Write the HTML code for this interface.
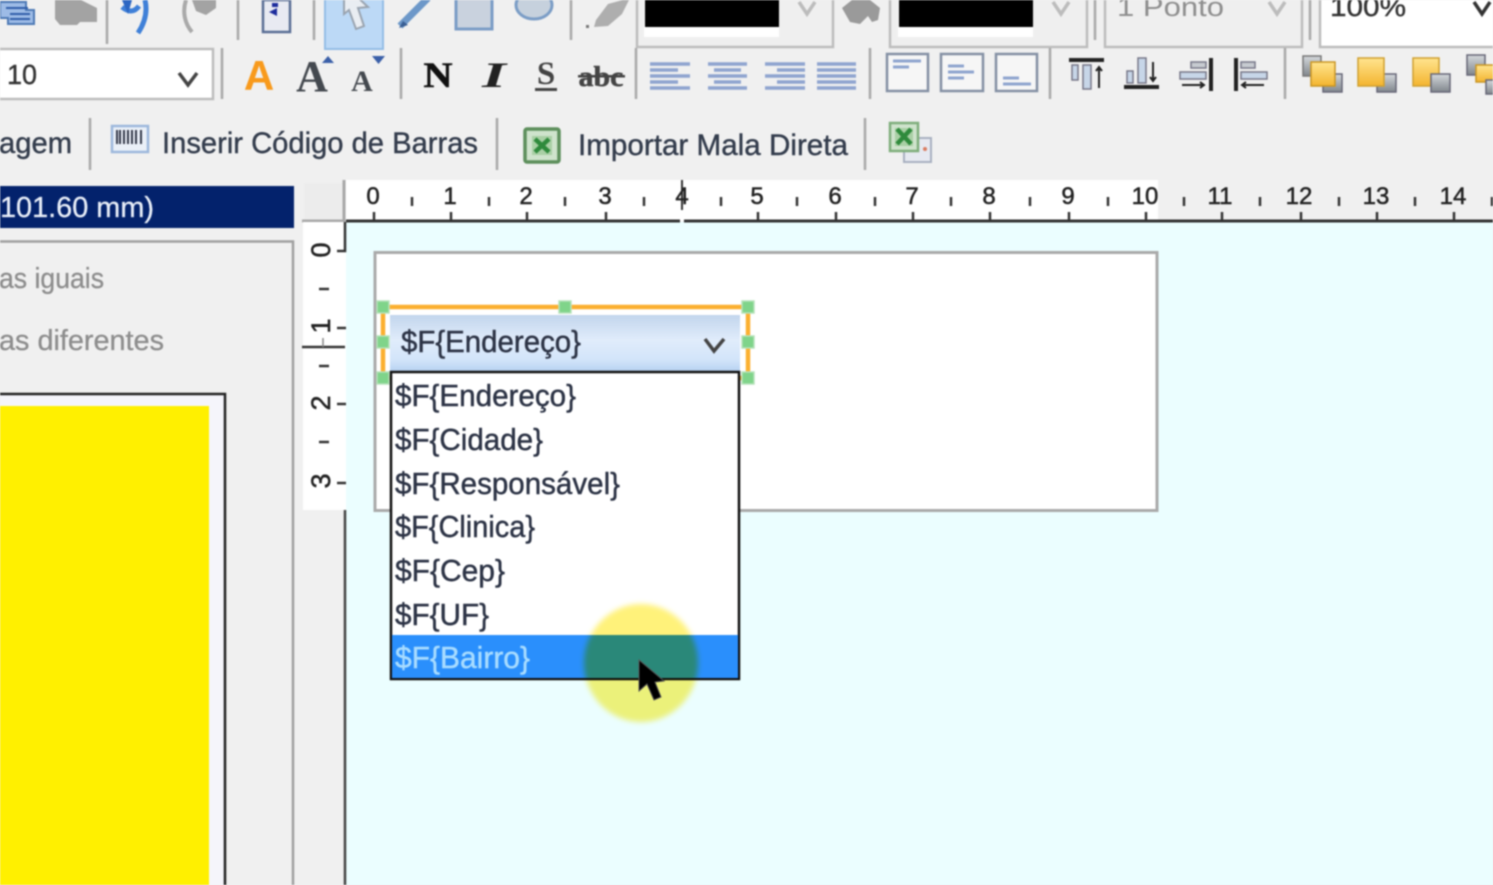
<!DOCTYPE html>
<html lang="pt"><head><meta charset="utf-8"><title>Editor</title>
<style>
html,body{margin:0;padding:0;background:#f0f0f0;width:1493px;height:885px;overflow:hidden}
svg{display:block;position:absolute;left:0;top:0;filter:blur(.85px)}
text{font-family:"Liberation Sans","DejaVu Sans",sans-serif}
.r{font-size:24px;fill:#222;stroke:#222;stroke-width:.5;text-anchor:middle}
.rv{font-size:27px}
.i{font-size:31px;fill:#2c3345;stroke:#2c3345;stroke-width:.45}
.t{font-size:30px;fill:#333c4c;stroke:#333c4c;stroke-width:.4}
.sep{stroke:#a8a8a8;stroke-width:2.5}
.tk{stroke:#333;stroke-width:2.5}
.ch{fill:none;stroke-width:3.5}
.al{stroke:#8ea4cf;stroke-width:3.5}
.bx{fill:#f6f6f6;stroke:#8490a4;stroke-width:2.5}
.ln{stroke:#8ea4cf;stroke-width:3}
</style></head><body>
<svg width="1493" height="885" viewBox="0 0 1493 885" xmlns="http://www.w3.org/2000/svg">
<defs>
<linearGradient id="cb" x1="0" y1="0" x2="0" y2="1"><stop offset="0" stop-color="#c2d5ec"/><stop offset=".45" stop-color="#e0ecfb"/><stop offset=".8" stop-color="#d2e4f9"/><stop offset="1" stop-color="#b8d3f2"/></linearGradient>
<linearGradient id="gold" x1="0" y1="0" x2="0" y2="1"><stop offset="0" stop-color="#ffe48f"/><stop offset="1" stop-color="#f3b42f"/></linearGradient>
<linearGradient id="gry" x1="0" y1="0" x2="0" y2="1"><stop offset="0" stop-color="#d4d8dc"/><stop offset="1" stop-color="#80868c"/></linearGradient>
<filter id="soft"><feGaussianBlur stdDeviation="2.6"/></filter>
</defs>
<rect width="1493" height="885" fill="#f0f0f0"/>

<!-- Row 1 -->
<g>
<path d="M0 2h26v8h8v14H8v-6H0z" fill="#9dbbe6" stroke="#4d79b5" stroke-width="2"/>
<path d="M6 8h22M10 14h20M10 19h20" stroke="#2f5da8" stroke-width="2"/>
<path d="M55 0h26l16 8v14H80l-3 3H60l-5-6z" fill="#a3a3a3"/>
<line class="sep" x1="107" y1="0" x2="107" y2="44"/>
<path d="M122 7c6 5 12 6 17-1M145 0c3 13-1 24-7 33" fill="none" stroke="#3f80d8" stroke-width="5"/>
<path d="M122 0h10l-4 14z" fill="#2c66c2"/>
<path d="M186 0c-4 12-1 24 6 32" fill="none" stroke="#a9a9a9" stroke-width="4"/>
<path d="M192 0h24v8l-10 7-10-4z" fill="#a3a3a3"/>
<line class="sep" x1="238" y1="0" x2="238" y2="40"/>
<rect x="263" y="0" width="27" height="32" fill="#e8eaf2" stroke="#5a6f95" stroke-width="2.5"/>
<path d="M272 3h6v4h-6zM269 12l8-4v8z" fill="#1c2c9c"/>
<line class="sep" x1="314" y1="0" x2="314" y2="40"/>
<rect x="325" y="-2" width="58" height="51" fill="#bcd9f6" stroke="#94bde6" stroke-width="2"/>
<path d="M344 -2L344 14 349 10 356 29 364 26 358 8 368 7 352 -8z" fill="#e9edf2" stroke="#9aa4b0" stroke-width="2"/>
<path d="M400 26L428 -2" stroke="#6d98c9" stroke-width="7"/>
<path d="M399 28l4-7 5 4z" fill="#3a5f94"/>
<rect x="456" y="-4" width="36" height="33" fill="#c9d2de" stroke="#7b9dc6" stroke-width="3"/>
<ellipse cx="534" cy="5" rx="18" ry="14" fill="#c6d1dd" stroke="#7b9dc6" stroke-width="3"/>
<line class="sep" x1="571" y1="0" x2="571" y2="40"/>
<path d="M596 20l12-16 22-6-8 16-14 12-14 1z" fill="#aeaeae"/>
<rect x="586" y="25" width="3" height="3" fill="#777"/>
<rect x="637" y="-4" width="196" height="51" fill="#efefef" stroke="#bdbdbd" stroke-width="2.5"/>
<rect x="644" y="0" width="135" height="37" fill="#fff"/>
<rect x="645" y="-4" width="134" height="31" fill="#000"/>
<path class="ch" d="M799 2l8 12 8-12" stroke="#bcbcbc"/>
<path d="M842 8l10-8h18l10 8-2 12-6 2-4-6-8 8-10-2z" fill="#9a9a9a"/>
<rect x="890" y="-4" width="197" height="51" fill="#efefef" stroke="#bdbdbd" stroke-width="2.5"/>
<rect x="898" y="0" width="135" height="37" fill="#fff"/>
<rect x="899" y="-4" width="134" height="31" fill="#000"/>
<path class="ch" d="M1053 2l8 12 8-12" stroke="#bcbcbc"/>
<line class="sep" x1="1095" y1="0" x2="1095" y2="40"/>
<rect x="1105" y="-4" width="197" height="51" fill="#efefef" stroke="#bdbdbd" stroke-width="2.5"/>
<text x="1117" y="16" font-size="27" fill="#8e8e8e" textLength="107" lengthAdjust="spacingAndGlyphs">1 Ponto</text>
<path class="ch" d="M1269 2l8 12 8-12" stroke="#bcbcbc"/>
<line class="sep" x1="1310" y1="0" x2="1310" y2="40"/>
<rect x="1320" y="-4" width="190" height="51" fill="#fff" stroke="#bdbdbd" stroke-width="2.5"/>
<text x="1330" y="16" font-size="27" fill="#333" stroke="#333" stroke-width=".4" textLength="76" lengthAdjust="spacingAndGlyphs">100%</text>
<path class="ch" d="M1474 2l8 12 8-12" stroke="#333"/>
</g>

<!-- Row 2 -->
<g>
<rect x="-3" y="49" width="216" height="50" fill="#fff" stroke="#bdbdbd" stroke-width="2.5"/>
<text x="7" y="84" font-size="28" fill="#333" stroke="#333" stroke-width=".4" textLength="30" lengthAdjust="spacingAndGlyphs">10</text>
<path class="ch" d="M179 73l9 12 9-12" stroke="#444"/>
<line class="sep" x1="222" y1="48" x2="222" y2="99"/>
<text x="259" y="90" font-size="42" font-weight="bold" fill="#f89a1c" text-anchor="middle" style="font-family:'Liberation Sans',sans-serif">A</text>
<text x="312" y="91" font-size="44" font-weight="bold" fill="#44494f" text-anchor="middle" style="font-family:'Liberation Serif',serif">A</text>
<path d="M322 63l6-7 6 7z" fill="#3a5fa8"/>
<text x="362" y="91" font-size="30" font-weight="bold" fill="#44494f" text-anchor="middle" style="font-family:'Liberation Serif',serif">A</text>
<path d="M372 56h13l-6.500 8z" fill="#3a5fa8"/>
<line class="sep" x1="401" y1="48" x2="401" y2="99"/>
<text x="438" y="87" font-size="36" font-weight="bold" fill="#111" text-anchor="middle" textLength="29" lengthAdjust="spacingAndGlyphs" stroke="#111" stroke-width=".6" style="font-family:'Liberation Serif',serif">N</text>
<text x="494" y="87" font-size="36" font-weight="bold" font-style="italic" fill="#222" text-anchor="middle" textLength="24" lengthAdjust="spacingAndGlyphs" style="font-family:'Liberation Serif',serif">I</text>
<text x="546" y="84" font-size="33" font-weight="bold" fill="#444" text-anchor="middle" style="font-family:'Liberation Serif',serif">S</text>
<rect x="535" y="88" width="22" height="3" fill="#444"/>
<text x="601" y="86" font-size="29" font-weight="bold" fill="#444" stroke="#444" stroke-width=".5" text-anchor="middle" textLength="45" lengthAdjust="spacingAndGlyphs" style="font-family:'Liberation Serif',serif">abc</text>
<rect x="578" y="75" width="47" height="2.500" fill="#444"/>
<line class="sep" x1="636" y1="48" x2="636" y2="99"/>
<g class="al">
<path d="M650 64h40M650 70h28M650 76h40M650 82h28M650 88h40"/>
<path d="M708 64h39M714 70h27M708 76h39M714 82h27M708 88h39"/>
<path d="M765 64h40M777 70h28M765 76h40M777 82h28M765 88h40"/>
<path d="M817 64h39M817 70h39M817 76h39M817 82h39M817 88h39"/>
</g>
<line class="sep" x1="870" y1="48" x2="870" y2="99"/>
<rect class="bx" x="887" y="54" width="41" height="37"/>
<path class="ln" d="M893 61h28M893 67h16"/>
<rect class="bx" x="941" y="54" width="42" height="37"/>
<path class="ln" d="M948 66h16M948 72h26M948 78h16"/>
<rect class="bx" x="996" y="54" width="41" height="37"/>
<path class="ln" d="M1003 78h16M1003 84h28"/>
<line class="sep" x1="1050" y1="48" x2="1050" y2="99"/>
<!-- align top / bottom / right / left -->
<rect x="1069" y="58" width="35" height="4" fill="#222"/>
<rect x="1072" y="65" width="6" height="15" fill="#c7d6e8" stroke="#778" stroke-width="1.500"/>
<rect x="1083" y="65" width="8" height="24" fill="#c7d6e8" stroke="#778" stroke-width="1.500"/>
<path d="M1099 88V67M1096 71l3-4 3 4" stroke="#222" stroke-width="2" fill="none"/>
<rect x="1124" y="85" width="35" height="4" fill="#222"/>
<rect x="1127" y="71" width="6" height="12" fill="#c7d6e8" stroke="#778" stroke-width="1.500"/>
<rect x="1138" y="58" width="8" height="25" fill="#c7d6e8" stroke="#778" stroke-width="1.500"/>
<path d="M1153 62v19M1150 77l3 4 3-4" stroke="#222" stroke-width="2" fill="none"/>
<rect x="1209" y="58" width="4" height="33" fill="#222"/>
<rect x="1191" y="62" width="15" height="6" fill="#c7cbd0" stroke="#778" stroke-width="1.500"/>
<rect x="1180" y="72" width="26" height="7" fill="#c7d6e8" stroke="#778" stroke-width="1.500"/>
<path d="M1182 85h22M1200 82l4 3-4 3" stroke="#222" stroke-width="2" fill="none"/>
<rect x="1234" y="58" width="4" height="33" fill="#222"/>
<rect x="1241" y="62" width="14" height="6" fill="#c7cbd0" stroke="#778" stroke-width="1.500"/>
<rect x="1241" y="72" width="26" height="7" fill="#c7d6e8" stroke="#778" stroke-width="1.500"/>
<path d="M1264 85h-22M1246 82l-4 3 4 3" stroke="#222" stroke-width="2" fill="none"/>
<line class="sep" x1="1285" y1="48" x2="1285" y2="99"/>
<!-- layers -->
<rect x="1303" y="56" width="18" height="20" fill="url(#gry)" stroke="#777" stroke-width="1.500"/>
<rect x="1323" y="74" width="19" height="18" fill="url(#gry)" stroke="#667" stroke-width="1.500"/>
<rect x="1311" y="62" width="24" height="24" fill="url(#gold)" stroke="#c99522" stroke-width="1.500"/>
<rect x="1377" y="74" width="19" height="18" fill="url(#gry)" stroke="#667" stroke-width="1.500"/>
<rect x="1358" y="58" width="26" height="28" fill="url(#gold)" stroke="#d0a030" stroke-width="1.500"/>
<rect x="1413" y="58" width="26" height="28" fill="url(#gold)" stroke="#d0a030" stroke-width="1.500"/>
<rect x="1431" y="74" width="19" height="18" fill="url(#gry)" stroke="#667" stroke-width="1.500"/>
<rect x="1467" y="55" width="18" height="20" fill="url(#gry)" stroke="#667" stroke-width="1.500"/>
<rect x="1476" y="65" width="20" height="17" fill="url(#gold)" stroke="#c99522" stroke-width="1.500"/>
<rect x="1486" y="80" width="10" height="14" fill="url(#gry)" stroke="#667" stroke-width="1.500"/>
</g>

<!-- Row 3 -->
<g>
<text class="t" x="-1" y="153" textLength="73" lengthAdjust="spacingAndGlyphs">agem</text>
<line class="sep" x1="90" y1="118" x2="90" y2="170"/>
<rect x="112" y="126" width="36" height="26" fill="#eaf0f8" stroke="#9db8dc" stroke-width="2.500"/>
<path d="M117 130v14M120 130v14M124 130v14M128 130v14M132 130v14M136 130v14M141 130v14" stroke="#34394a" stroke-width="2"/>
<text class="t" x="162" y="153" textLength="316" lengthAdjust="spacingAndGlyphs">Inserir Código de Barras</text>
<line class="sep" x1="497" y1="118" x2="497" y2="170"/>
<rect x="525" y="129" width="34" height="33" rx="2" fill="#cfe3cc" stroke="#5d8f5c" stroke-width="3.500"/>
<rect x="532" y="136" width="20" height="19" fill="#a9cfa5"/>
<path d="M535 139l14 13M549 139l-14 13" stroke="#2f8a3c" stroke-width="4.500"/>
<text class="t" x="578" y="155" textLength="270" lengthAdjust="spacingAndGlyphs">Importar Mala Direta</text>
<line class="sep" x1="865" y1="118" x2="865" y2="170"/>
<rect x="904" y="138" width="27" height="24" fill="#e6e9f1" stroke="#a8b0c0" stroke-width="2"/>
<circle cx="925" cy="149" r="2" fill="#d97c60"/>
<rect x="890" y="123" width="28" height="28" fill="#cfe3cc" stroke="#7fae7c" stroke-width="2.500"/>
<rect x="895" y="128" width="18" height="18" fill="#a9cfa5"/>
<path d="M897 129l14 15M911 129l-14 15" stroke="#2f8a3c" stroke-width="4.500"/>
</g>

<!-- Left panel -->
<rect x="0" y="186" width="294" height="42" fill="#03226c"/>
<text x="0" y="217" font-size="29" fill="#e8eef8" stroke="#e8eef8" stroke-width=".3" textLength="154" lengthAdjust="spacingAndGlyphs">101.60 mm)</text>
<path d="M0 241.500H293V885" fill="none" stroke="#a0a0a0" stroke-width="2.500"/>
<text x="-1" y="288" font-size="29" fill="#8d8d8d" stroke="#8d8d8d" stroke-width=".3" textLength="105" lengthAdjust="spacingAndGlyphs">as iguais</text>
<text x="-1" y="350" font-size="29" fill="#8d8d8d" stroke="#8d8d8d" stroke-width=".3" textLength="165" lengthAdjust="spacingAndGlyphs">as diferentes</text>
<rect x="0" y="395" width="224" height="490" fill="#f5f5fb"/>
<path d="M0 394H225V885" fill="none" stroke="#222" stroke-width="2.500"/>
<rect x="0" y="406" width="209" height="479" fill="#fff000"/>

<!-- Canvas -->
<rect x="346" y="222" width="1147" height="663" fill="#ebfeff"/>

<!-- Top ruler -->
<rect x="346" y="180" width="812" height="41" fill="#fff"/>
<path d="M346 221H680M684 221H1493" stroke="#333" stroke-width="3"/>
<path class="tk" d="M374 212v9M451 212v9M527 212v9M606 212v9M758 212v9M836 212v9M913 212v9M990 212v9M1069 212v9M1146 212v9M1222 212v9M1301 212v9M1377 212v9M1454 212v9"/>
<path class="tk" d="M412 197v9M489 197v9M565 197v9M644 197v9M721 197v9M797 197v9M875 197v9M951 197v9M1030 197v9M1108 197v9M1184 197v9M1260 197v9M1339 197v9M1415 197v9M1492 197v9"/>
<path d="M682 180v30" stroke="#333" stroke-width="2"/>
<g>
<text class="r" x="373" y="204">0</text><text class="r" x="450" y="204">1</text><text class="r" x="526" y="204">2</text><text class="r" x="605" y="204">3</text><text class="r" x="682" y="204">4</text><text class="r" x="757" y="204">5</text><text class="r" x="835" y="204">6</text><text class="r" x="912" y="204">7</text><text class="r" x="989" y="204">8</text><text class="r" x="1068" y="204">9</text><text class="r" x="1145" y="204">10</text><text class="r" x="1220" y="204">11</text><text class="r" x="1299" y="204">12</text><text class="r" x="1376" y="204">13</text><text class="r" x="1453" y="204">14</text>
</g>

<!-- Corner box -->
<rect x="304" y="183" width="39" height="37" fill="#ececec"/>
<path d="M344 180V221H302" fill="none" stroke="#a8a8a8" stroke-width="3"/>

<!-- Vertical ruler -->
<rect x="303" y="222" width="43" height="288" fill="#fff"/>
<path d="M345 222V251H337" fill="none" stroke="#333" stroke-width="2.500"/>
<path d="M345 510V885" stroke="#444" stroke-width="2.500"/>
<path class="tk" d="M337 328h9M337 404h9M337 483h9M319 289h10M319 366h10M319 442h10"/>
<path d="M302 347h43" stroke="#333" stroke-width="2.500" fill="none"/>
<path d="M323 338v9" stroke="#888" stroke-width="1.500" fill="none"/>
<text class="r rv" transform="translate(330 250) rotate(-90)">0</text>
<text class="r rv" transform="translate(330 326) rotate(-90)">1</text>
<text class="r rv" transform="translate(330 403) rotate(-90)">2</text>
<text class="r rv" transform="translate(330 481) rotate(-90)">3</text>

<!-- Page -->
<rect x="375" y="252.500" width="782" height="258" fill="#fff" stroke="#aaa" stroke-width="3"/>

<!-- Selection -->
<rect x="383" y="307" width="365" height="71" fill="none" stroke="#fbb030" stroke-width="4.500"/>
<rect x="390" y="315" width="350" height="56" fill="url(#cb)"/>
<text class="i" x="401" y="352" textLength="180" lengthAdjust="spacingAndGlyphs">$F{Endereço}</text>
<path class="ch" d="M705 339l9 12 10-12" stroke="#444"/>
<g fill="#7fd48a" stroke="#b6e2ba" stroke-width="1.500">
<rect x="377" y="301" width="12" height="12"/><rect x="559" y="301" width="12" height="12"/><rect x="742" y="301" width="12" height="12"/>
<rect x="377" y="336" width="12" height="12"/><rect x="742" y="336" width="12" height="12"/>
<rect x="377" y="372" width="12" height="12"/><rect x="742" y="372" width="12" height="12"/>
</g>

<!-- Dropdown -->
<rect x="391" y="372" width="348" height="307" fill="#fff" stroke="#111" stroke-width="2.500"/>
<rect x="392" y="635" width="346" height="43" fill="#2a8ffc"/>
<text class="i" x="395" y="406" textLength="181" lengthAdjust="spacingAndGlyphs">$F{Endereço}</text>
<text class="i" x="395" y="450" textLength="148" lengthAdjust="spacingAndGlyphs">$F{Cidade}</text>
<text class="i" x="395" y="494" textLength="225" lengthAdjust="spacingAndGlyphs">$F{Responsável}</text>
<text class="i" x="395" y="537" textLength="140" lengthAdjust="spacingAndGlyphs">$F{Clinica}</text>
<text class="i" x="395" y="581" textLength="110" lengthAdjust="spacingAndGlyphs">$F{Cep}</text>
<text class="i" x="395" y="625" textLength="94" lengthAdjust="spacingAndGlyphs">$F{UF}</text>
<text class="i" x="395" y="668" textLength="135" lengthAdjust="spacingAndGlyphs" style="fill:#a8dcff;stroke:#a8dcff">$F{Bairro}</text>

<!-- Cursor highlight -->
<ellipse cx="641" cy="663" rx="57" ry="59" fill="#fff27a" filter="url(#soft)" style="mix-blend-mode:multiply"/>
<path d="M639 660V691L647 684 654 700 661 697 655 682 664 681Z" fill="#000" stroke="#555" stroke-width="1"/>
</svg>
</body></html>
